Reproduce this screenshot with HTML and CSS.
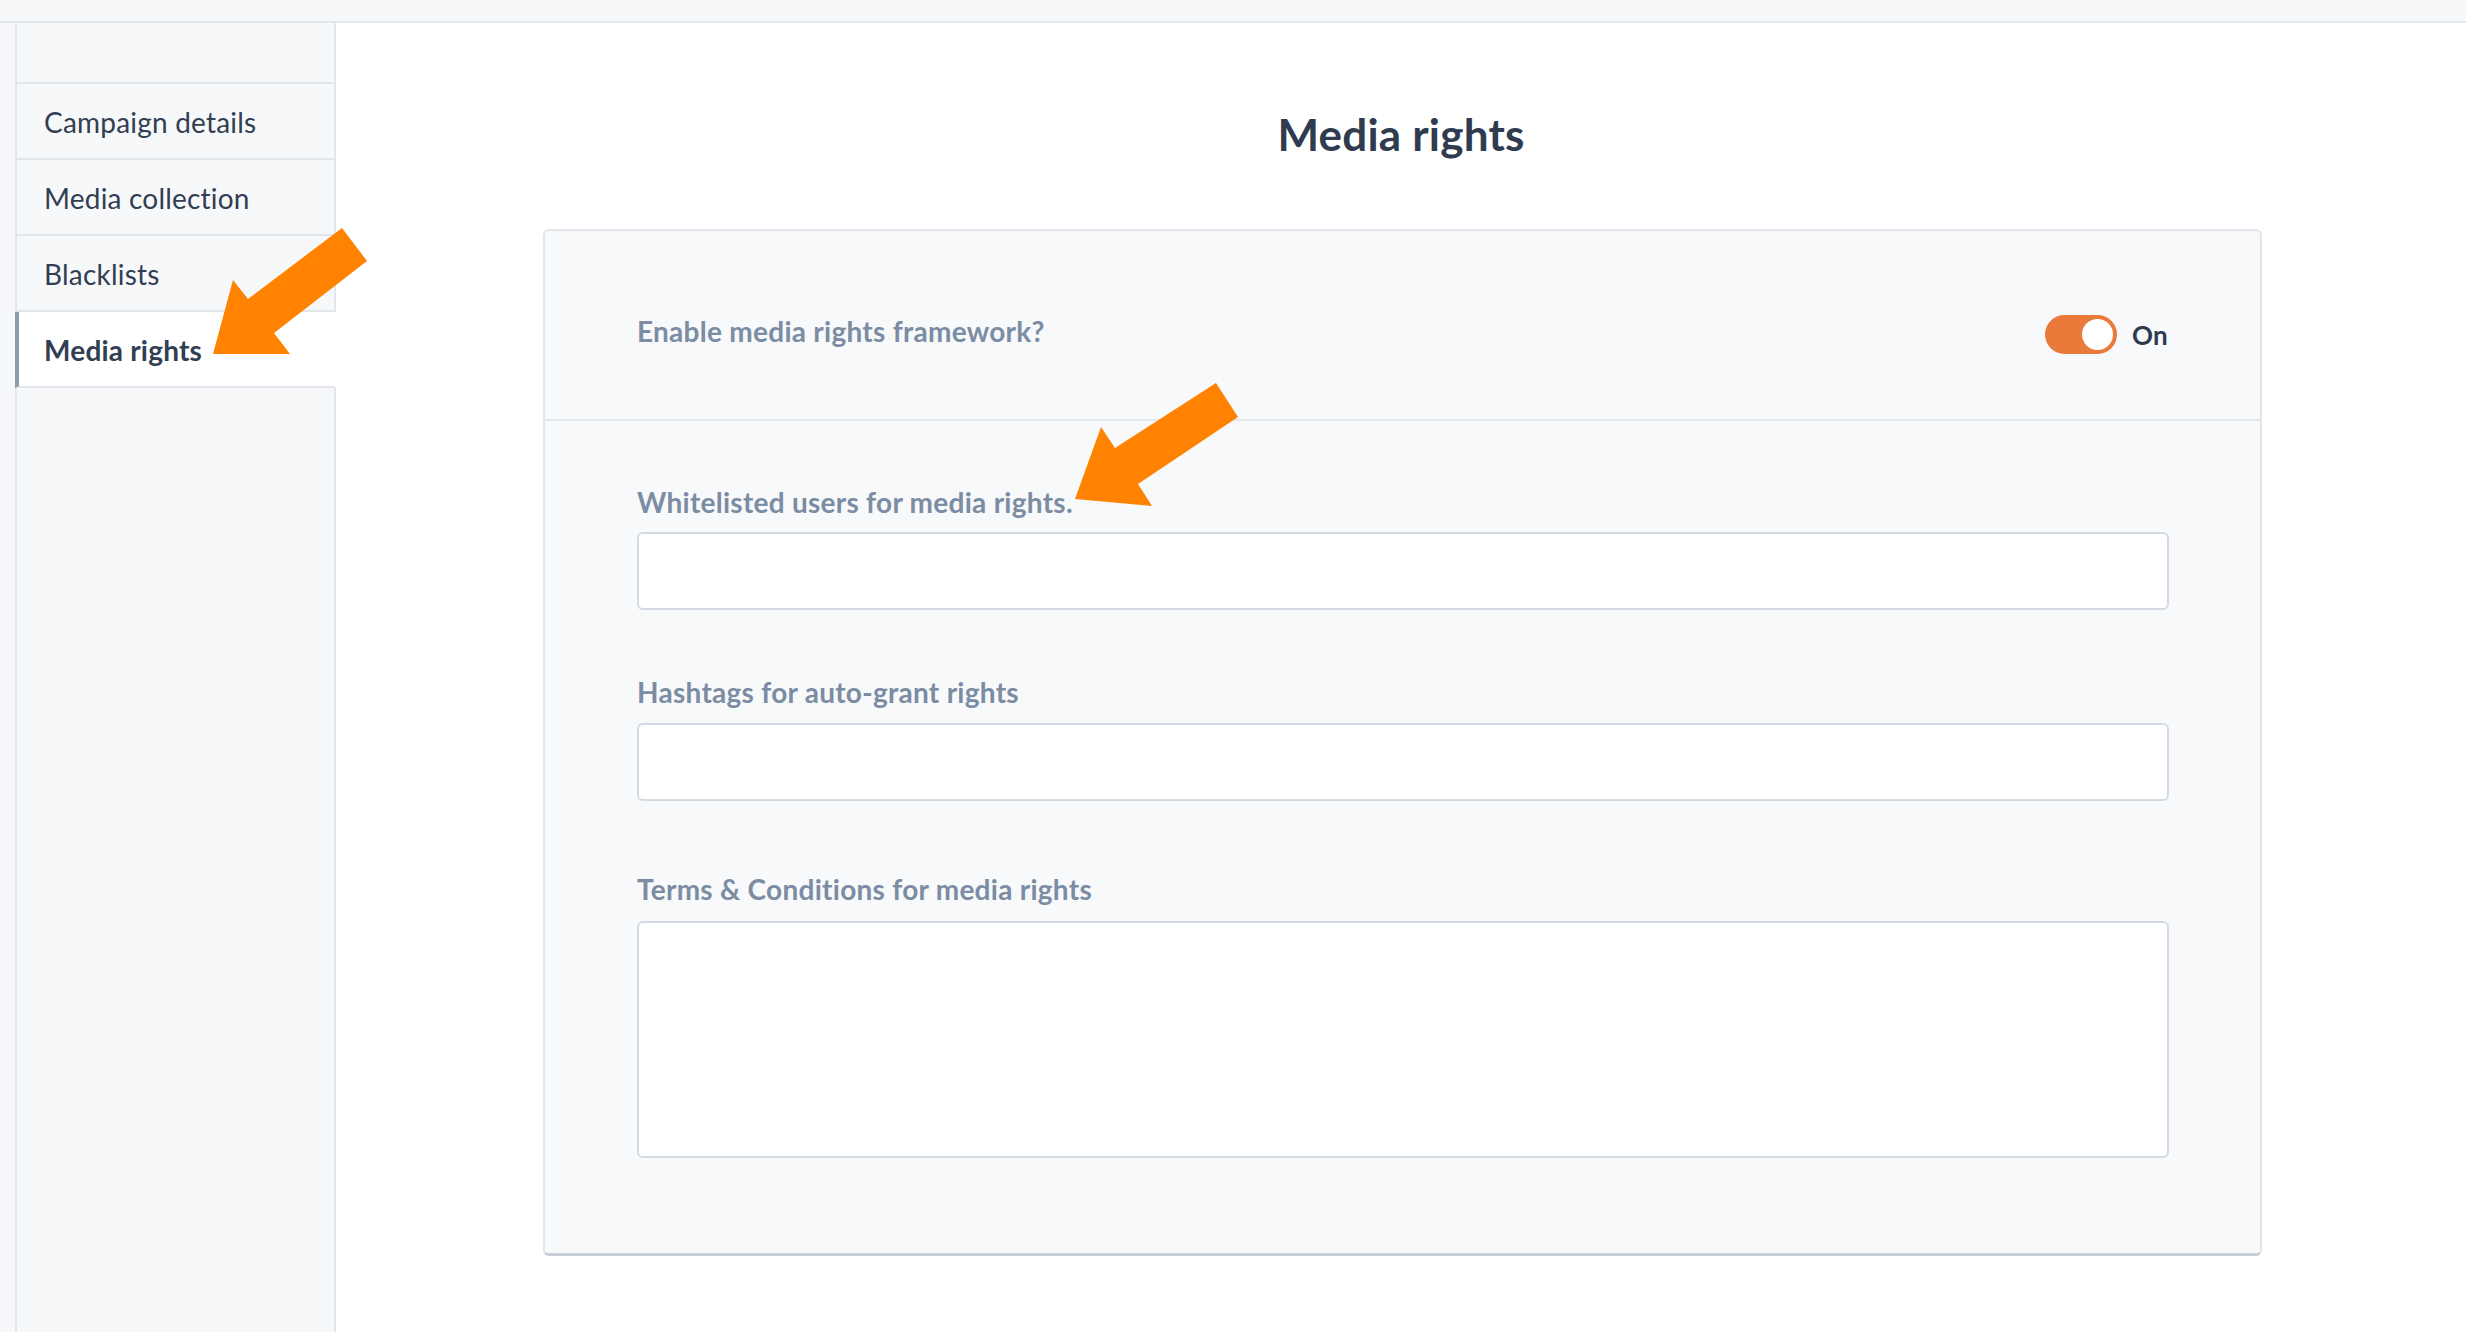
FILE: index.html
```html
<!DOCTYPE html>
<html lang="en">
<head>
  <meta charset="UTF-8">
  <title>Media rights</title>
  <meta name="viewport" content="width=device-width, initial-scale=1.0">
  <link rel="stylesheet" href="styles.css">
</head>
<body>

  <!-- Top strip -->
  <div class="topbar"></div>

  <div class="layout">

    <!-- Settings navigation -->
    <nav class="sidebar">
      <div class="nav-head"></div>
      <div class="nav-item">Campaign details</div>
      <div class="nav-item">Media collection</div>
      <div class="nav-item">Blacklists</div>
      <div class="nav-item active">Media rights</div>
      <div class="nav-rest"></div>
    </nav>

    <!-- Content -->
    <main class="main">
      <h1 class="page-title">Media rights</h1>

      <section class="card">
        <div class="card-head">
          <span class="field-label">Enable media rights framework?</span>
          <div class="switch-row">
            <span class="switch"><span class="knob"></span></span>
            <span class="switch-text">On</span>
          </div>
        </div>

        <div class="card-body">
          <label class="field-label" for="whitelist">Whitelisted users for media rights.</label>
          <input class="text-input" id="whitelist" type="text">

          <label class="field-label gap" for="hashtags">Hashtags for auto-grant rights</label>
          <input class="text-input" id="hashtags" type="text">

          <label class="field-label gap-lg" for="terms">Terms &amp; Conditions for media rights</label>
          <textarea class="text-area" id="terms"></textarea>
        </div>
      </section>
    </main>
  </div>

  <!-- Annotation arrows -->
  <svg class="arrows" width="2466" height="1332" viewBox="0 0 2466 1332">
    <polygon fill="#ff8300" points="342,228 367,261 274,333 290,354 213,354 233,280 248,299"/>
    <polygon fill="#ff8300" points="1216,383 1238,417 1138,484 1152,506 1075,499 1101,427 1115,448"/>
  </svg>

</body>
</html>
```

FILE: styles.css
```css
body {
  font-family: Lato, "Open Sans", sans-serif;
  background: #f7f8fa;
  margin: 0;
  padding: 0;
  overflow: hidden;
  color: #313d51;
}

.topbar {
  height: 21px;
  border-bottom: 2px solid #e4e7ec;
}

.layout {
  display: flex;
  padding-left: 15px;
  height: calc(100vh - 23px);
}

/* Sidebar */

.sidebar {
  width: 321px;
  display: flex;
  flex-direction: column;
  flex-shrink: 0;
}

.nav-head {
  height: 59px;
  border-left: 2px solid #e2e6ec;
  border-right: 2px solid #e2e6ec;
  border-bottom: 2px solid #e2e6ec;
}

.nav-item {
  height: 74px;
  display: flex;
  align-items: center;
  padding: 2px 0 0 27px;
  box-sizing: content-box;
  height: 72px;
  font-size: 28px;
  letter-spacing: 0.2px;
  color: #323e52;
  border-left: 2px solid #e2e6ec;
  border-right: 2px solid #e2e6ec;
  border-bottom: 2px solid #e2e6ec;
}

.nav-item.active {
  background: #fff;
  font-weight: 700;
  padding-left: 25px;
  border-left: 4px solid #8d9cb0;
  border-right-color: transparent;
}

.nav-rest {
  flex: 1;
  border-left: 2px solid #e2e6ec;
  border-right: 2px solid #e2e6ec;
}

/* Main */

.main {
  flex: 1;
  background: #fff;
  padding-top: 85px;
}

.page-title {
  margin: 0;
  font-size: 44px;
  line-height: 1.2;
  font-weight: 700;
  letter-spacing: 0.2px;
  text-align: center;
  color: #2f3b4f;
}

.card {
  box-sizing: border-box;
  width: 1719px;
  margin: 68px 0 0 207px;
  background: #f7f9fb;
  border: 2px solid #e2e6ec;
  border-bottom: 3px solid #c7ced8;
  border-radius: 6px;
}

.card-head {
  height: 172px;
  padding: 16px 92px 0 92px;
  display: flex;
  align-items: center;
  justify-content: space-between;
  border-bottom: 2px solid #e1e6ee;
}

.field-label {
  display: block;
  font-size: 28px;
  line-height: 1.2;
  font-weight: 700;
  letter-spacing: 0.27px;
  color: #7b8ca3;
}

.card-head .field-label {
  margin-bottom: 2px;
}

.switch-row {
  display: flex;
  align-items: center;
  gap: 15px;
  margin-top: 4px;
}

.switch {
  width: 72px;
  height: 39px;
  border-radius: 20px;
  background: #ea7a3a;
  display: flex;
  align-items: center;
  justify-content: flex-end;
  padding-right: 4px;
  box-sizing: border-box;
}

.knob {
  width: 31px;
  height: 31px;
  border-radius: 50%;
  background: #fff;
}

.switch-text {
  font-size: 26px;
  font-weight: 700;
  letter-spacing: 0.3px;
  color: #2e3a4e;
}

.card-body {
  padding: 65px 91px 95px 92px;
  display: flex;
  flex-direction: column;
}

.field-label.gap {
  margin-top: 66px;
}

.field-label.gap-lg {
  margin-top: 72px;
}

.text-input, .text-area {
  box-sizing: border-box;
  width: 100%;
  margin: 13px 0 0 0;
  background: #fff;
  border: 2px solid #d3dae3;
  border-radius: 6px;
  font-family: inherit;
  font-size: 24px;
}

.text-input {
  height: 78px;
}

.text-area {
  height: 237px;
  resize: none;
  margin-top: 14px;
}

/* Annotations */

.arrows {
  position: absolute;
  top: 0;
  left: 0;
  pointer-events: none;
}
```
